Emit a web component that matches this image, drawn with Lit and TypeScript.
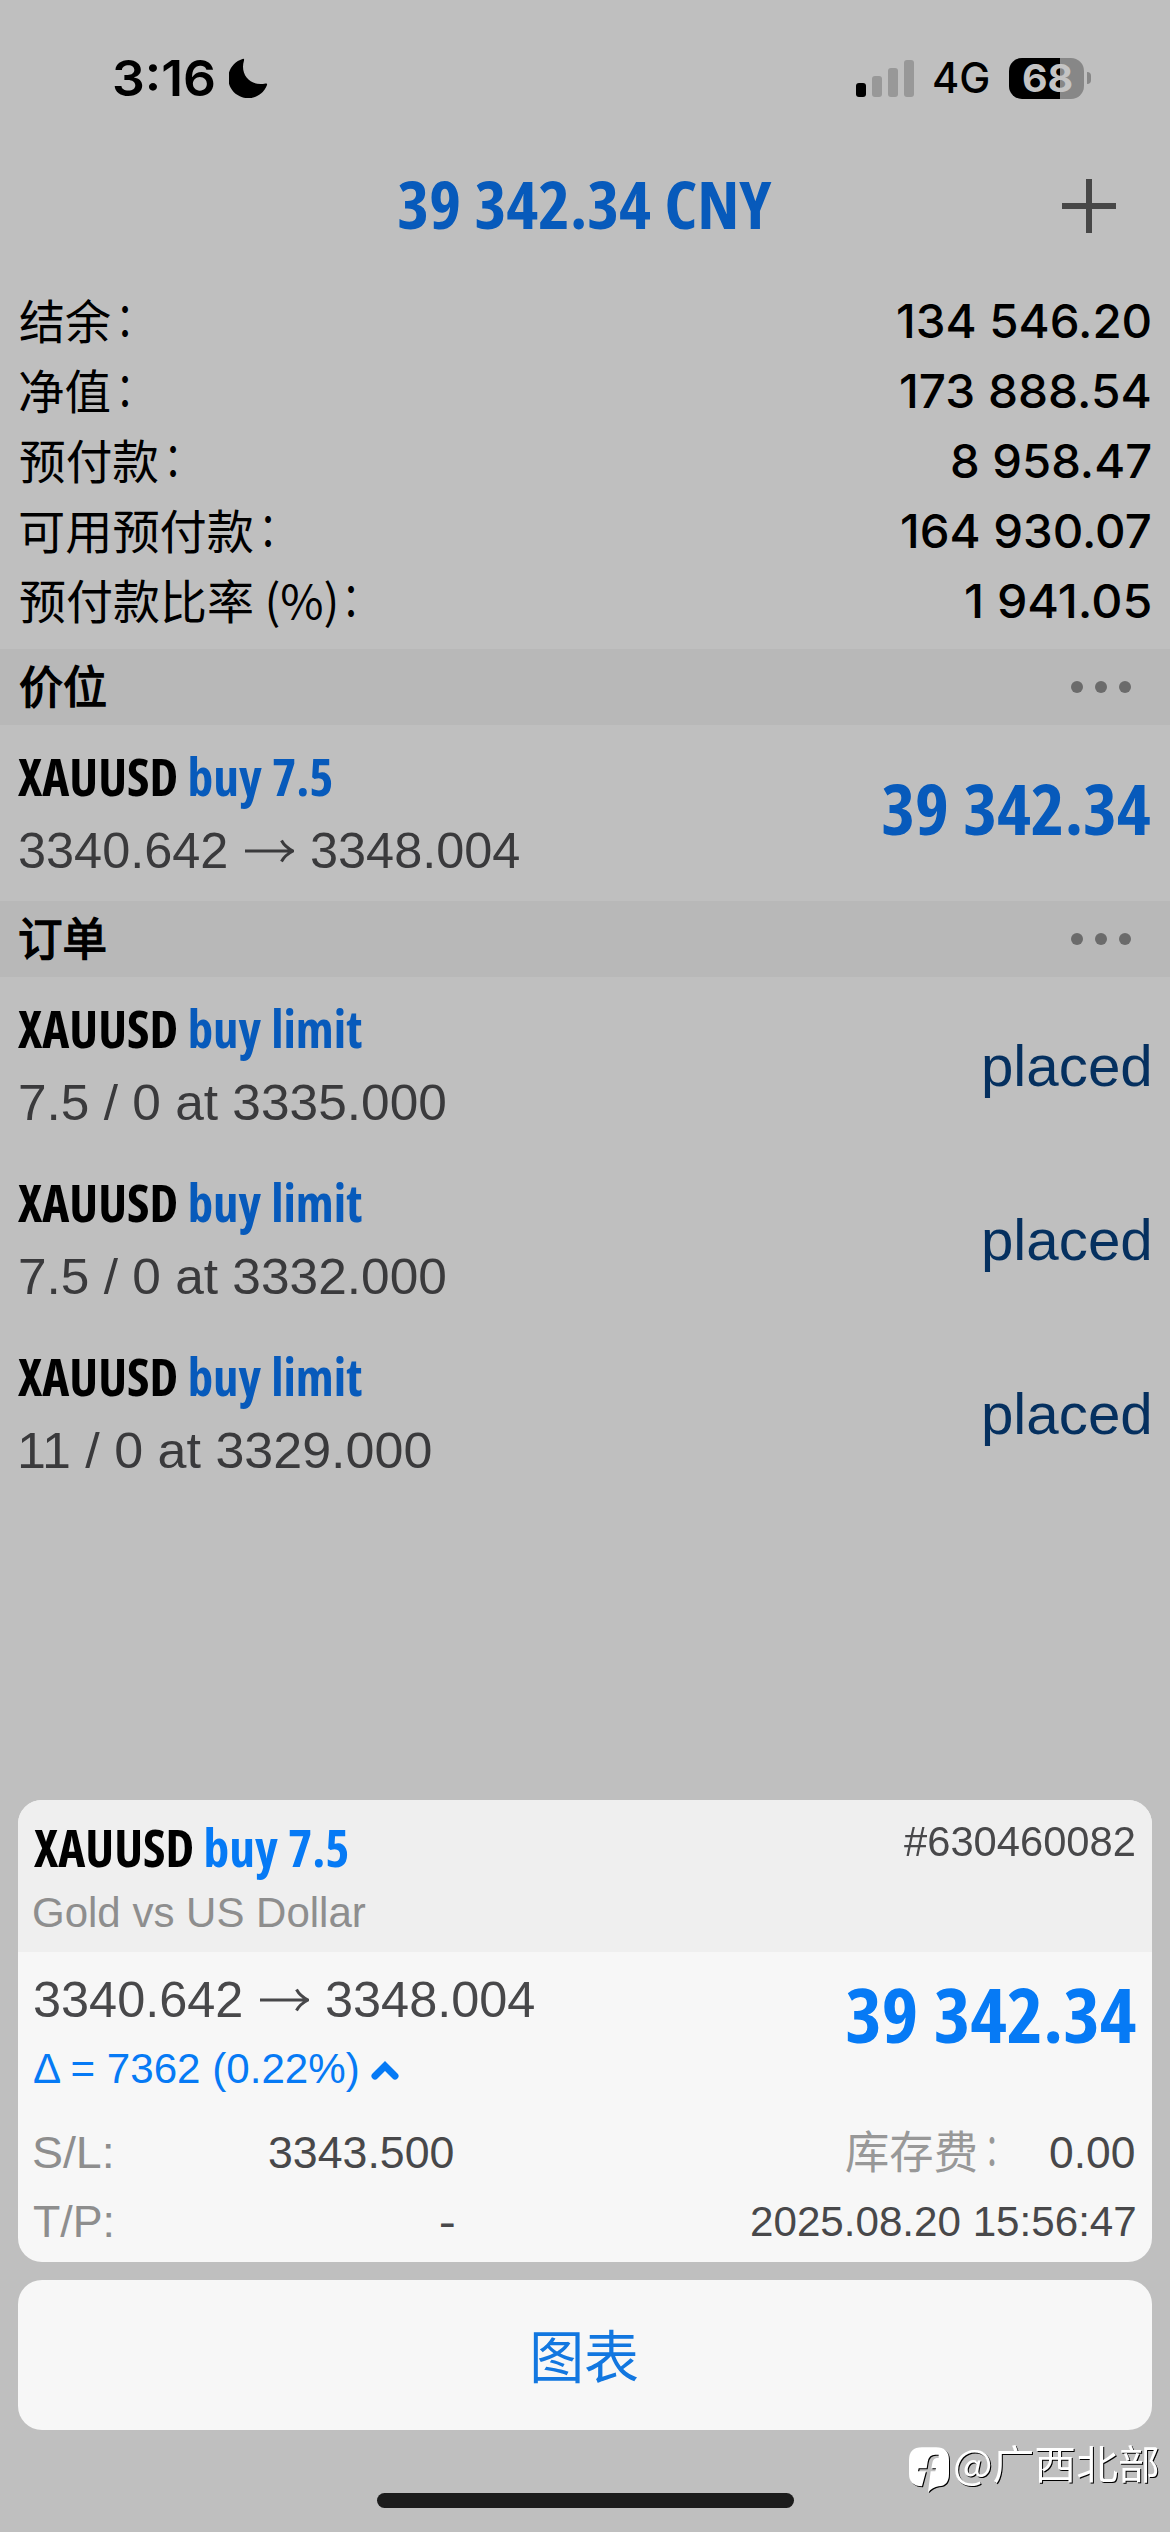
import { LitElement, html, css, svg } from "lit";
import { customElement, property } from "lit/decorators.js";

/** One line of text whose visible glyphs span exactly `w` pixels. */
@customElement("fit-text")
export class FitText extends LitElement {
  @property() text = "";
  @property({ type: Number }) w = 100;

  static styles = css`
    :host { display: block; flex: none; white-space: pre; }
    .inner { display: inline-block; transform-origin: 0 50%; vertical-align: top; }
  `;

  updated() {
    const span = this.renderRoot.querySelector(".inner") as HTMLElement;
    const cs = getComputedStyle(this);
    const ctx = document.createElement("canvas").getContext("2d")!;
    ctx.font = `${cs.fontWeight} ${cs.fontSize} ${cs.fontFamily}`;
    const m = ctx.measureText(this.text);
    const k = span.offsetWidth / m.width || 1;
    const left = -m.actualBoundingBoxLeft * k;
    const ink = (m.actualBoundingBoxLeft + m.actualBoundingBoxRight) * k;
    const s = this.w / ink;
    this.style.width = `${this.w}px`;
    span.style.transform = `translateX(${-left * s}px) scaleX(${s})`;
  }

  render() {
    return html`<span class="inner">${this.text}</span>`;
  }
}

const account: [string, number, string, number][] = [
  ["结余", 90, "134 546.20", 252],
  ["净值", 90, "173 888.54", 249],
  ["预付款", 138, "8 958.47", 198],
  ["可用预付款", 233, "164 930.07", 248],
  ["预付款比率 (%)", 316, "1 941.05", 184],
];

const orders: [string, number][] = [
  ["7.5 / 0 at 3335.000", 425],
  ["7.5 / 0 at 3332.000", 425],
  ["11 / 0 at 3329.000", 410],
];

const arrow = svg`<path d="M1 12H48M37.5 1.5Q41 8 49 12Q41 16 37.5 22.5" fill="none" stroke="currentColor" stroke-width="3"/>`;

@customElement("app-root")
export class AppRoot extends LitElement {
  static styles = css`
    :host { display: block; }
    .screen {
      position: relative; box-sizing: border-box; width: 1170px; height: 2532px; overflow: hidden;
      display: flex; flex-direction: column; background: #bfbfbf; color: #000;
      font-family: "Liberation Sans", sans-serif;
    }
    .row { display: flex; align-items: center; }
    .spread { display: flex; justify-content: space-between; align-items: flex-start; }
    svg { display: block; flex: none; }

    .status { height: 156px; padding: 0 79px 0 114px; font-family: Inter, sans-serif; flex: none; }
    .time { font-size: 50px; font-weight: 600; margin-right: 15px; line-height: 60px; }
    .grow { flex: 1; }
    .signal { display: flex; align-items: flex-end; gap: 6px; height: 37px; margin-right: 20px; }
    .bar { width: 10px; border-radius: 3px; background: #989898; }
    .b1 { height: 14px; background: #000; }
    .b2 { height: 21px; }
    .b3 { height: 29px; }
    .b4 { height: 37px; }
    .net { font-size: 42px; font-weight: 500; margin-right: 21px; line-height: 50px; }
    .battery {
      width: 75px; height: 41px; border-radius: 13px; display: flex; align-items: center;
      justify-content: center; background: linear-gradient(90deg, #000 51px, #878787 51px);
    }
    .level { font-size: 38px; font-weight: 700; color: #c4c4c4; line-height: 41px; }
    .nub { width: 4px; height: 12px; margin-left: 3px; background: #878787; border-radius: 0 4px 4px 0; }

    .nav {
      height: 100px; flex: none; display: grid; grid-template-columns: 1fr auto 1fr;
      align-items: center; padding: 0 54px;
    }
    .cond { font-family: "Open Sans", sans-serif; font-weight: 680; font-stretch: 75%; word-spacing: 0.02em; }
    .blue { color: #075abb; }
    .title { grid-column: 2; font-size: 66px; line-height: 80px; padding-bottom: 7px; }
    .plus { grid-column: 3; justify-self: end; }

    .account { padding: 30px 20px 13px; flex: none; }
    .acc { height: 70px; display: flex; justify-content: space-between; align-items: center; }
    .caption { display: flex; align-items: center; gap: 12px; }
    .label { font: 400 47px/66px "Noto Sans CJK SC", sans-serif; padding-bottom: 5px; }
    .colon { padding-bottom: 10px; }
    .value { font: 500 47px/70px Inter, sans-serif; }

    .section {
      height: 76px; flex: none; background: #b8b8b8; padding: 0 39px 0 20px;
      display: flex; justify-content: space-between; align-items: center;
    }
    .name {
      font: 400 45px/70px "Noto Sans CJK SC", sans-serif; padding-bottom: 4px;
      -webkit-text-stroke: 1.5px #000;
    }
    .dots { display: flex; gap: 12px; }
    .dot { width: 12px; height: 12px; border-radius: 50%; background: #6b6b6b; }

    .item { height: 174px; flex: none; box-sizing: border-box; padding: 21px 20px 0 18px; }
    .position { height: 176px; }
    .left { display: flex; flex-direction: column; gap: 15px; }
    .sym { display: flex; font-size: 51px; line-height: 60px; gap: 14px; }
    .detail { font-size: 50px; line-height: 60px; color: #3a3a3c; display: flex; align-items: center; padding-left: 2px; }
    .prices { gap: 17px; padding-left: 1px; }
    .pnl { font-size: 70px; line-height: 125px; }
    .placed { font-size: 57px; line-height: 136px; color: #05305f; }

    .sheet { margin: auto 18px 0; flex: none; display: flex; flex-direction: column; gap: 18px; }
    .card { border-radius: 24px; overflow: hidden; background: #f7f7f7; color: #48484a; }
    .head { height: 152px; box-sizing: border-box; background: #efefef; padding: 17px 17px 0 16px; }
    .titles { display: flex; flex-direction: column; gap: 11px; }
    .ink { color: #000; }
    .bright { color: #067af5; }
    .gray { color: #8e8e8e; }
    .small { font-size: 42px; line-height: 50px; }
    .body { height: 310px; box-sizing: border-box; padding: 18px 17px 0 16px; }
    .quote { display: flex; flex-direction: column; gap: 14px; }
    .body .detail { color: inherit; padding-left: 0; }
    .delta { display: flex; align-items: center; gap: 13px; }
    .total { font-size: 75px; line-height: 88px; }
    .facts { display: flex; flex-direction: column; gap: 19px; margin-top: 34px; }
    .fact { height: 50px; display: flex; align-items: center; font-size: 44.5px; line-height: 50px; }
    .pair { width: 420px; display: flex; justify-content: space-between; align-items: center; }
    .fee { margin-right: 56px; gap: 13px; }
    .swap { font: 400 45px/50px "Noto Sans CJK SC", sans-serif; padding-bottom: 6px; color: #989898; }
    .swap.colon { padding-bottom: 13px; }
    .button {
      height: 150px; border-radius: 24px; background: #f7f7f7; display: flex;
      align-items: center; justify-content: center;
    }
    .action { font: 400 57px/80px "Noto Sans CJK SC", sans-serif; padding-bottom: 4px; color: #1277e0; }
    .foot { height: 102px; flex: none; display: flex; justify-content: center; align-items: flex-start; }
    .home { width: 417px; height: 15px; border-radius: 8px; background: #1c1c1c; margin-top: 63px; }
    .mark {
      position: absolute; left: 909px; top: 2439px; display: flex; align-items: flex-start; gap: 5px;
      filter: drop-shadow(1.5px 1.5px 0 #000); color: #fff;
    }
    .logo { margin-top: 8px; }
    .user { font: 400 40px/46px "Noto Sans CJK SC", sans-serif; }
  `;

  private symbol(side: string, w: number, main = "blue") {
    return html`<div class="sym cond">
      <fit-text class="ink" text="XAUUSD" w="158"></fit-text>
      <fit-text class=${main} text=${side} w=${w}></fit-text>
    </div>`;
  }

  private prices() {
    return html`<div class="detail prices">
      <fit-text text="3340.642" w="208"></fit-text>
      <svg width="50" height="24" viewBox="0 0 50 24">${arrow}</svg>
      <fit-text text="3348.004" w="209"></fit-text>
    </div>`;
  }

  private section(name: string) {
    return html`<div class="section">
      <fit-text class="name" text=${name} w="85"></fit-text>
      <div class="dots"><div class="dot"></div><div class="dot"></div><div class="dot"></div></div>
    </div>`;
  }

  render() {
    return html`<div class="screen">
      <div class="status row">
        <fit-text class="time" text="3:16" w="100"></fit-text>
        <svg width="39" height="40" viewBox="0 0 39 40">
          <path d="M13.5 1A20 20 0 1 0 38 27Q38.600 25 36.500 25.500C22 29 10.500 17 15 2.500Q15.600 .2 13.500 1Z" />
        </svg>
        <div class="grow"></div>
        <div class="signal">
          <div class="bar b1"></div><div class="bar b2"></div><div class="bar b3"></div><div class="bar b4"></div>
        </div>
        <fit-text class="net" text="4G" w="54"></fit-text>
        <div class="battery"><fit-text class="level" text="68" w="48"></fit-text></div>
        <div class="nub"></div>
      </div>

      <div class="nav">
        <fit-text class="title cond blue" text="39 342.34 CNY" w="373"></fit-text>
        <svg class="plus" width="54" height="54" viewBox="0 0 54 54">
          <path d="M27 0V54M0 27H54" stroke="#474747" stroke-width="6" />
        </svg>
      </div>

      <div class="account">
        ${account.map(([l, lw, v, vw]) => html`<div class="acc">
          <div class="caption">
            <fit-text class="label" text=${l} w=${lw}></fit-text>
            <fit-text class="label colon" text="：" w="6.5"></fit-text>
          </div>
          <fit-text class="value" text=${v} w=${vw}></fit-text>
        </div>`)}
      </div>

      ${this.section("价位")}
      <div class="item position spread">
        <div class="left">${this.symbol("buy 7.5", 142)}${this.prices()}</div>
        <fit-text class="pnl cond blue" text="39 342.34" w="267"></fit-text>
      </div>

      ${this.section("订单")}
      ${orders.map(([text, w]) => html`<div class="item spread">
        <div class="left">
          ${this.symbol("buy limit", 171)}
          <div class="detail"><fit-text text=${text} w=${w}></fit-text></div>
        </div>
        <fit-text class="placed" text="placed" w="166"></fit-text>
      </div>`)}

      <div class="sheet">
        <div class="card">
          <div class="head spread">
            <div class="titles">
              ${this.symbol("buy 7.5", 142, "bright")}
              <fit-text class="small gray" text="Gold vs US Dollar" w="332"></fit-text>
            </div>
            <fit-text class="small" text="#630460082" w="231"></fit-text>
          </div>
          <div class="body">
            <div class="spread">
              <div class="quote">
                ${this.prices()}
                <div class="delta bright">
                  <fit-text class="small" text="Δ = 7362 (0.22%)" w="324"></fit-text>
                  <svg width="28" height="22" viewBox="0 0 28 22">
                    <path d="M4 18L14 8L24 18" fill="none" stroke="currentColor" stroke-width="7" stroke-linecap="round" />
                  </svg>
                </div>
              </div>
              <fit-text class="total cond bright" text="39 342.34" w="288"></fit-text>
            </div>
            <div class="facts">
              <div class="fact">
                <div class="pair">
                  <fit-text class="gray" text="S/L:" w="77"></fit-text>
                  <fit-text text="3343.500" w="185"></fit-text>
                </div>
                <div class="grow"></div>
                <div class="row fee">
                  <fit-text class="swap" text="库存费" w="130"></fit-text>
                  <fit-text class="swap colon" text="：" w="5.5"></fit-text>
                </div>
                <fit-text text="0.00" w="85"></fit-text>
              </div>
              <div class="fact">
                <div class="pair">
                  <fit-text class="gray" text="T/P:" w="78"></fit-text>
                  <fit-text text="-" w="14"></fit-text>
                </div>
                <div class="grow"></div>
                <fit-text class="small" text="2025.08.20 15:56:47" w="383"></fit-text>
              </div>
            </div>
          </div>
        </div>
        <div class="button"><fit-text class="action" text="图表" w="105"></fit-text></div>
      </div>

      <div class="foot"><div class="home"></div></div>

      <div class="mark">
        <svg class="logo" width="41" height="46" viewBox="27 50 123 138">
          <path fill="#fff" d="M66 51H108Q147 51 147 90V130Q147 166 116 168Q98 171 84 186L92 123H106L108 114H94L97 98Q99 84 110 83H116V73H106Q86 73 83 95L80 114H56L54 123H78L66 168Q27 166 27 130V90Q27 51 66 51Z" />
        </svg>
        <fit-text class="user" text="@广西北部" w="203"></fit-text>
      </div>
    </div>`;
  }
}
